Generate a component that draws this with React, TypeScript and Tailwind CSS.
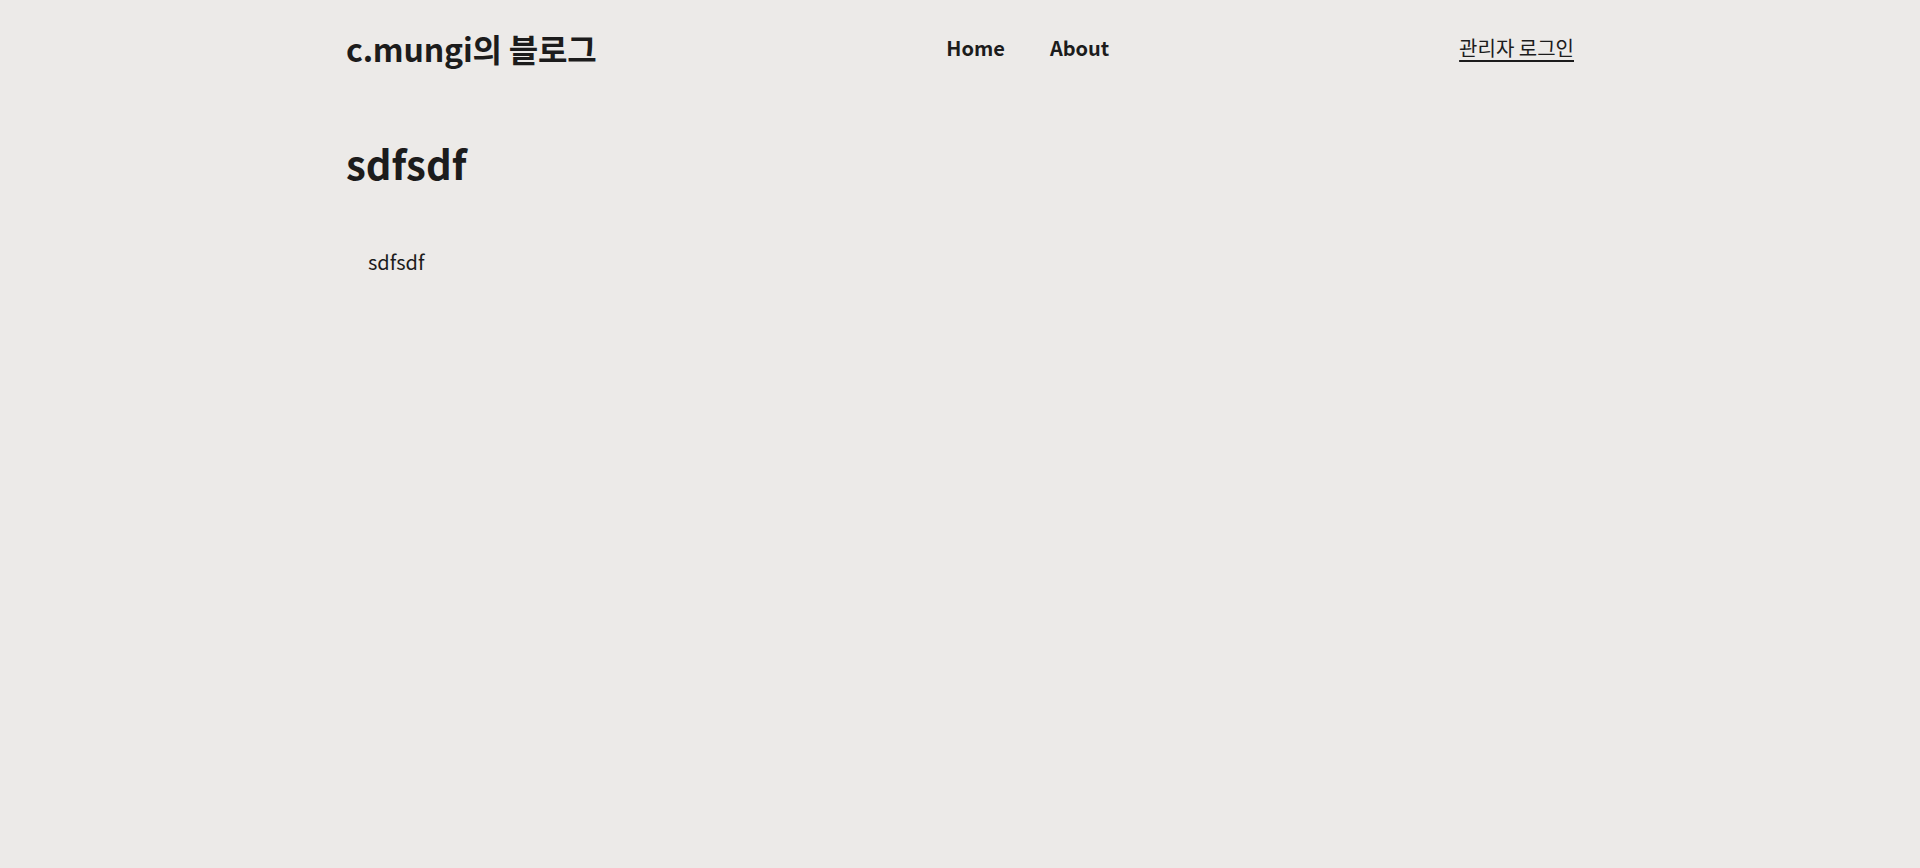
export default function App() {
  return (
    <div
      className="min-h-screen w-full bg-[#eceae8] text-[#1c1c1c]"
      style={{ fontFamily: '"Noto Sans CJK KR", "Noto Sans", sans-serif' }}
    >
      <div className="mx-auto w-[1228px]">
        <header className="flex h-[96px] items-center justify-between">
          <a className="text-[32px] font-bold tracking-[-0.2px]">c.mungi의 블로그</a>
          <nav className="flex items-center gap-[45px] text-[20px] font-bold">
            <a>Home</a>
            <a>About</a>
          </nav>
          <a className="text-[20px] underline decoration-2 underline-offset-4">관리자 로그인</a>
        </header>

        <main className="pt-[42px]">
          <h1 className="text-[40px] font-bold leading-[50px]">sdfsdf</h1>
          <div className="mt-[59px] px-[22px]">
            <p className="text-[20px]">sdfsdf</p>
          </div>
        </main>
      </div>
    </div>
  );
}
